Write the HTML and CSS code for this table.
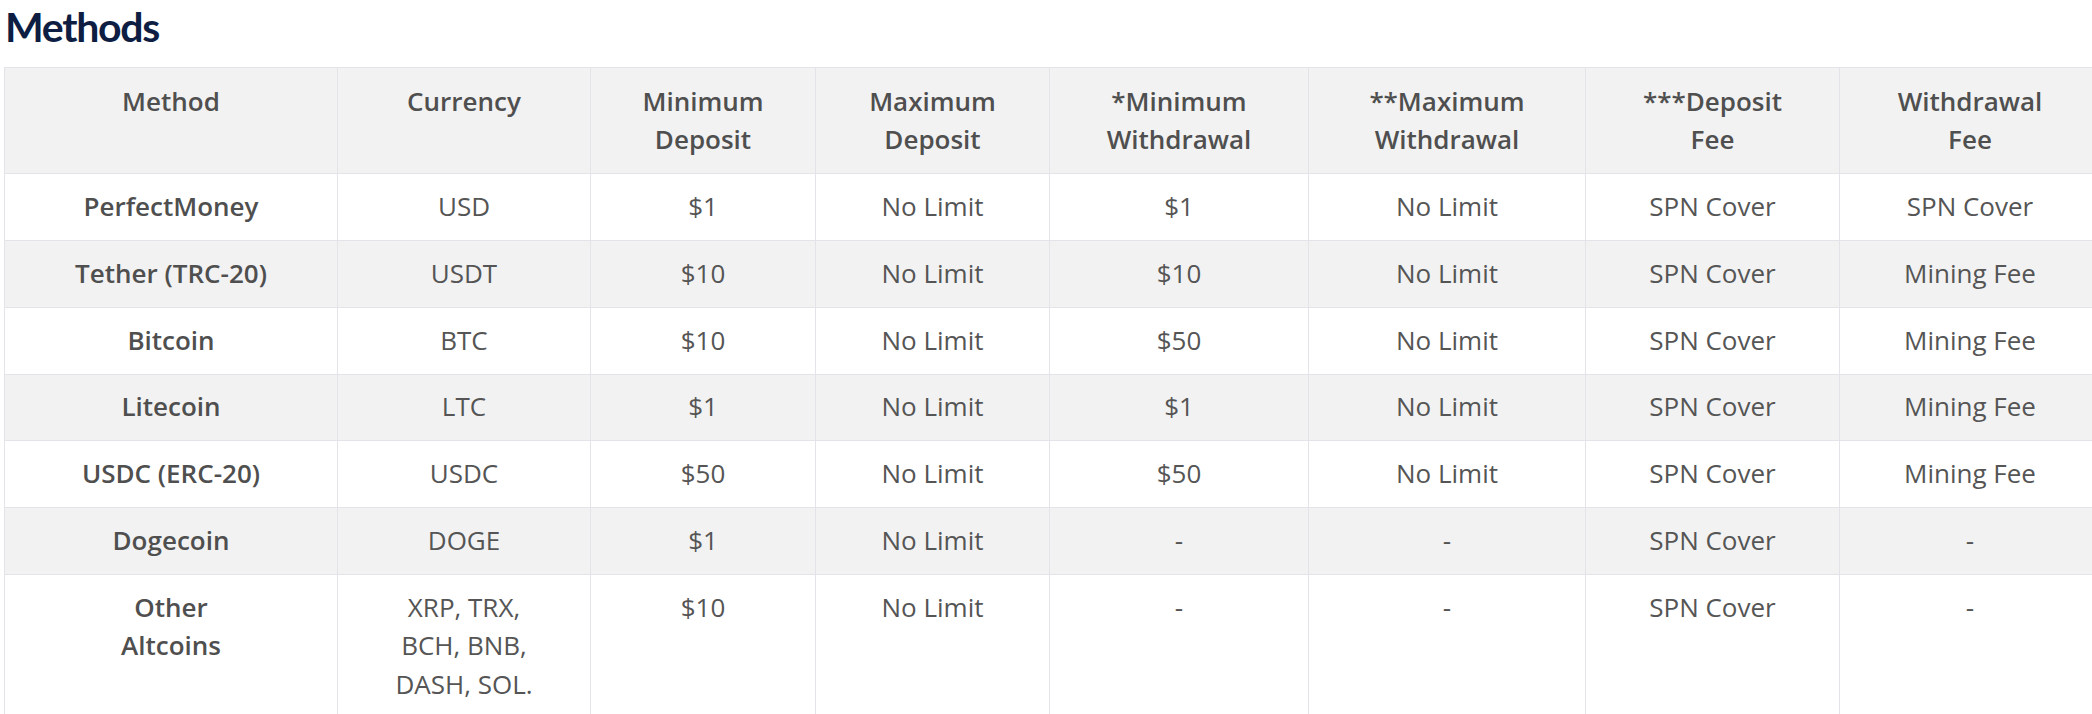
FILE: index.html
```html
<!DOCTYPE html>
<html lang="en">
<head>
<meta charset="utf-8">
<title>Methods</title>
<link rel="stylesheet" href="styles.css">
</head>
<body>
<h2 class="title">Methods</h2>
<table class="methods">
  <colgroup>
    <col class="c1"><col class="c2"><col class="c3"><col class="c4"><col class="c5"><col class="c6"><col class="c7"><col class="c8">
  </colgroup>
  <thead>
    <tr>
      <th>Method</th>
      <th>Currency</th>
      <th>Minimum<br>Deposit</th>
      <th>Maximum<br>Deposit</th>
      <th>*Minimum<br>Withdrawal</th>
      <th>**Maximum<br>Withdrawal</th>
      <th>***Deposit<br>Fee</th>
      <th>Withdrawal<br>Fee</th>
    </tr>
  </thead>
  <tbody>
    <tr><td class="name">PerfectMoney</td><td>USD</td><td>$1</td><td>No Limit</td><td>$1</td><td>No Limit</td><td>SPN Cover</td><td>SPN Cover</td></tr>
    <tr><td class="name">Tether (TRC-20)</td><td>USDT</td><td>$10</td><td>No Limit</td><td>$10</td><td>No Limit</td><td>SPN Cover</td><td>Mining Fee</td></tr>
    <tr><td class="name">Bitcoin</td><td>BTC</td><td>$10</td><td>No Limit</td><td>$50</td><td>No Limit</td><td>SPN Cover</td><td>Mining Fee</td></tr>
    <tr><td class="name">Litecoin</td><td>LTC</td><td>$1</td><td>No Limit</td><td>$1</td><td>No Limit</td><td>SPN Cover</td><td>Mining Fee</td></tr>
    <tr><td class="name">USDC (ERC-20)</td><td>USDC</td><td>$50</td><td>No Limit</td><td>$50</td><td>No Limit</td><td>SPN Cover</td><td>Mining Fee</td></tr>
    <tr><td class="name">Dogecoin</td><td>DOGE</td><td>$1</td><td>No Limit</td><td>-</td><td>-</td><td>SPN Cover</td><td>-</td></tr>
    <tr><td class="name">Other<br>Altcoins</td><td>XRP, TRX,<br>BCH, BNB,<br>DASH, SOL.</td><td>$10</td><td>No Limit</td><td>-</td><td>-</td><td>SPN Cover</td><td>-</td></tr>
  </tbody>
</table>
</body>
</html>
```

FILE: styles.css
```css
html, body {
  margin: 0;
  background: #ffffff;
}
html {
  overflow: hidden;
}
body {
  padding: 0 0 0 4px;
  font-family: "Open Sans", "Liberation Sans", sans-serif;
}
.title {
  margin: 0 0 13px 0;
  padding-left: 1px;
  font-family: Lato, "Open Sans", sans-serif;
  font-weight: 700;
  font-size: 41px;
  line-height: 54px;
  color: #0e1d42;
  letter-spacing: -1.3px;
}
.methods {
  table-layout: fixed;
  width: 2096px;
  border-collapse: collapse;
  font-size: 26px;
  line-height: 38.67px;
  color: #555555;
}
.c1 { width: 333px; }
.c2 { width: 253px; }
.c3 { width: 225px; }
.c4 { width: 234px; }
.c5 { width: 259px; }
.c6 { width: 277px; }
.c7 { width: 254px; }
.c8 { width: 261px; }
.methods th,
.methods td {
  border: 1px solid #e2e4ea;
  text-align: center;
  vertical-align: top;
  padding: 12.8px 8px 14.3px;
}
.methods th {
  background: #f2f2f2;
  font-weight: 600;
  color: #4f4f4f;
  padding-top: 13.5px;
  padding-bottom: 14.5px;
}
.methods td {
  font-weight: 400;
}
.methods td.name {
  font-weight: 600;
  color: #4f4f4f;
}
.methods tbody tr:nth-child(even) td {
  background: #f2f2f2;
}
```
